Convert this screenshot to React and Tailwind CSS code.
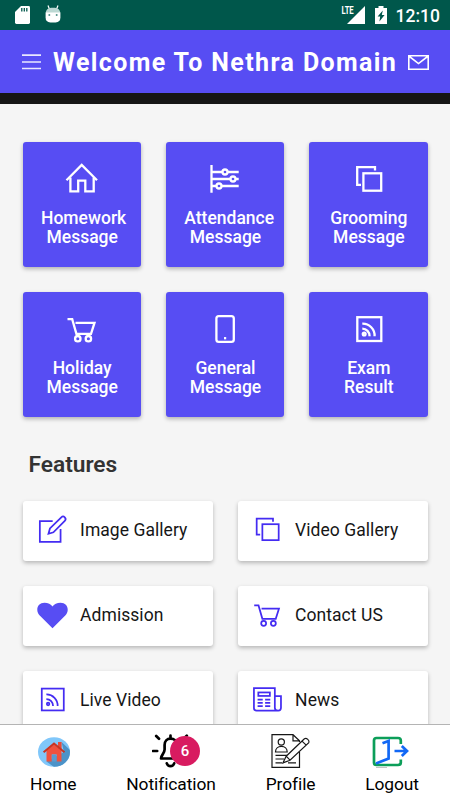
import React from "react";

const icons = {
  home: (
    <>
      <path d="M2.5 20.2 17.7 4.9 33 20.2" />
      <path d="M6.4 17.5V31.4H14.2V20.6H21.3V31.4H29.7V17.5" />
    </>
  ),
  sliders: (
    <>
      <path d="M4.5 5V32.7M4.5 12H15.3M20.7 12H31.7M4.5 19H23.3M28.7 19H31.7M4.5 26H9.3M14.7 26H31.7" />
      <circle cx="18" cy="12" r="2.5" />
      <circle cx="26" cy="19" r="2.5" />
      <circle cx="12" cy="26" r="2.5" />
    </>
  ),
  copies: (
    <>
      <path d="M10 24.8H6.2V7.2H24V10.6" />
      <rect x="12.4" y="13.3" width="17.8" height="17.4" />
    </>
  ),
  cart: (
    <>
      <path d="M3.5 9.2H8.2L12.4 23.8H27L30.5 12.8H11.5" />
      <circle cx="13.8" cy="28.7" r="2.7" />
      <circle cx="24.4" cy="28.7" r="2.7" />
    </>
  ),
  phone: (
    <>
      <rect x="9.4" y="6.1" width="17.4" height="25.8" rx="2.4" />
      <path d="M17 28.2H19.2" />
    </>
  ),
  rss: (
    <>
      <rect x="6.3" y="7.2" width="24" height="23.8" />
      <path d="M11.3 13.6A12 12 0 0 1 23.6 26.2M11.3 18.6A7.4 7.4 0 0 1 18.6 26.2" />
      <circle cx="13.2" cy="24" r="1.4" />
    </>
  ),
  edit: (
    <>
      <path d="M18.2 10H4.2V32.5H26.8V18.6" />
      <path d="M13.6 23.8 15.2 18 27.6 5.8A2.5 2.5 0 0 1 31.4 9.6L19 22.2Z" />
    </>
  ),
  heart: (
    <path
      d="M18 34 3.8 19.8C-1 14.4 1.7 6.4 9.3 6.4 13 6.4 16.4 8.2 18 10.4 19.6 8.2 23 6.4 26.7 6.4 34.3 6.4 37 14.4 32.2 19.8Z"
      fill="#574df3"
      stroke="none"
    />
  ),
  news: (
    <>
      <path d="M26 28.5V6.8H3.2V28.4C3.2 30.2 4.4 31.2 6 31.2H29.8C31.6 31.2 32.7 30 32.7 28.2V15.4H26M26 28.2C26 30 27.4 31.2 29.4 31.2" />
      <rect x="8" y="11.4" width="12.6" height="3.8" />
      <path d="M7.2 19.2H12.8M15.4 19.2H21M7.2 22.8H12.8M15.4 22.8H21M7.2 26.4H12.8M15.4 26.4H21" />
    </>
  ),
};

const messages = [
  { icon: "home", title: "Homework Message" },
  { icon: "sliders", title: "Attendance Message" },
  { icon: "copies", title: "Grooming Message" },
  { icon: "cart", title: "Holiday Message" },
  { icon: "phone", title: "General Message" },
  { icon: "rss", title: "Exam Result" },
];

const features = [
  { icon: "edit", title: "Image Gallery" },
  { icon: "copies", title: "Video Gallery" },
  { icon: "heart", title: "Admission" },
  { icon: "cart", title: "Contact US" },
  { icon: "rss", title: "Live Video" },
  { icon: "news", title: "News" },
];

const StatusBar = () => {
  return (
    <div className="h-[30px] shrink-0 bg-[#00574b] flex items-center pl-[15px] pr-[10px] text-white">
      <svg className="w-[15px] h-[18px]" viewBox="0 0 15 18">
        <path d="M6 0H13.6Q15 0 15 1.4V16.6Q15 18 13.6 18H1.4Q0 18 0 16.6V6Z" fill="#fff" />
        <path d="M6.8 2V5.5M9.3 2V5.5M11.8 2V5.5" stroke="#00574b" strokeWidth="1.3" />
      </svg>
      <svg className="w-4 h-[18px] ml-[15px] mb-[2px]" viewBox="0 0 16 18">
        <path d="M3 .5 4.4 4M13 .5 11.6 4" stroke="#fff" strokeWidth="1.2" />
        <path d="M.8 8C.8 4.6 3.5 2.8 8 2.8S15.2 4.6 15.2 8Z" fill="#bcd8d3" />
        <path d="M.6 7.4H15.4V12.6Q15.4 17.4 10.6 17.4H5.4Q.6 17.4 .6 12.6Z" fill="#fff" />
        <circle cx="4.3" cy="10" r="1" fill="#4f8f86" />
        <circle cx="11.7" cy="10" r="1" fill="#4f8f86" />
      </svg>
      <div className="ml-auto flex items-center">
        <span className="self-start -mr-[10px] text-[11px] leading-[11px] font-bold tracking-[-0.2px] scale-x-70">
          LTE
        </span>
        <svg className="w-[18px] h-[18px]" viewBox="0 0 18 18">
          <path d="M18 0V18H0Z" fill="#fff" />
        </svg>
        <svg className="w-3 h-[18px] ml-[10px]" viewBox="0 0 12 18">
          <path d="M3.5 0H8.5V2H12V18H0V2H3.5Z" fill="#fff" />
          <path d="M7.8 4.5 2.6 10.6H5.2L4.4 15.6 9.6 9H6.8Z" fill="#00574b" />
        </svg>
        <span className="ml-[9px] mt-[2px] text-[17.5px] leading-[18px] font-medium">12:10</span>
      </div>
    </div>
  );
};

const Header = () => {
  return (
    <div className="h-[74px] shrink-0 bg-[#574df3] border-b-[11px] border-b-[#161616] flex items-center pl-[22px] pr-[21px]">
      <svg className="w-[19px] h-4 shrink-0" viewBox="0 0 19 16" stroke="#e9e7ff" strokeWidth="1.7">
        <path d="M0 1.2H19M0 8H19M0 14.5H19" />
      </svg>
      <h1 className="ml-3 mt-[2px] text-[25px] leading-none font-bold tracking-[1.38px] whitespace-nowrap text-white">
        Welcome To Nethra Domain
      </h1>
      <svg className="w-[21px] h-[15px] shrink-0 ml-auto mt-[1px]" viewBox="0 0 21 15" fill="none" stroke="#fff" strokeWidth="1.6">
        <path d="M.8 .8H20.2V14.2H.8ZM.8 1 10.5 8.6 20.2 1" />
      </svg>
    </div>
  );
};

const MessageCard = ({ icon, title }) => {
  return (
    <div className="h-[125px] rounded-[3px] bg-[#574df3] pl-[18.5px] pr-[17.5px] pt-[18px] shadow-[0_2px_4px_rgba(0,0,0,0.28)] flex flex-col">
      <svg className="w-9 h-9 self-center shrink-0" viewBox="0 0 36 36" fill="none" stroke="#fff" strokeWidth="2.3">
        {icons[icon]}
      </svg>
      <p className="mt-[13px] text-center text-[17.5px] leading-[19px] font-medium text-white">
        {title.split(" ").map((word) => (
          <span key={word} className="block">
            {word}
          </span>
        ))}
      </p>
    </div>
  );
};

const FeatureCard = ({ icon, title }) => {
  return (
    <div className="h-[60px] rounded-[3px] bg-white pl-[13.6px] pb-[2px] shadow-[0_2px_4px_rgba(0,0,0,0.26)] flex items-center">
      <svg
        className="w-[33px] h-[33px] shrink-0 mb-[3px]"
        viewBox="0 0 36 36"
        fill="none"
        stroke="#442cf2"
        strokeWidth="1.9"
      >
        {icons[icon]}
      </svg>
      <span className="ml-[11px] text-[17.5px] tracking-[0.05px] text-[#161616]">{title}</span>
    </div>
  );
};

const HomeIcon = () => (
  <svg className="w-8 h-[30px] mt-[2px] ml-px" viewBox="0 0 32 30">
    <defs>
      <clipPath id="disc">
        <ellipse cx="16" cy="15" rx="16" ry="14.8" />
      </clipPath>
    </defs>
    <g clipPath="url(#disc)">
      <rect width="32" height="30" fill="#80c7fa" />
      <path d="M23.5 5 32 13V30H16L8.5 24.5 26 15Z" fill="#4c93c8" />
      <path d="M20 5H23.6V12H20Z" fill="#e64c3c" />
      <path d="M8.5 13.5 16 7.5 23.5 13.5V24.5H18.6V17.5H13.8V24.5H8.5Z" fill="#f0513e" />
      <path d="M5.6 15.2 16 6.6 26.5 15.2" fill="none" stroke="#c93422" strokeWidth="2" />
      <path d="M13.8 17.5H18.6V24.5H13.8Z" fill="#5a9bd0" />
    </g>
  </svg>
);

const BellIcon = () => (
  <svg className="w-[38px] h-[34px]" viewBox="0 0 38 34" fill="none" stroke="#000" strokeWidth="2.7" strokeLinecap="round">
    <path d="M4.2 2 7 4.8M.9 17H5.2M34.8 1.6 32.4 4M32 17H37" />
    <path d="M18.5 1.7V4M9 24.5H28C28 22.5 25 20.5 25 17V11C25 7 22 4.7 18.5 4.7S12.6 7 12.6 11V15.6C12.6 19.6 9 21 9 24.5Z" strokeLinejoin="round" />
    <path d="M14.8 29.3C16 33 21 33 22.2 29.3" />
  </svg>
);

const ProfileIcon = () => (
  <svg className="w-10 h-[34px]" viewBox="0 0 40 34" fill="none" stroke="#171717" strokeWidth="1.2">
    <path d="M28.5 8V6.8L22 .7H1V33.3H28.5V18M22 .7V6.8H28.5" />
    <circle cx="10.3" cy="8" r="3.1" />
    <path d="M4.5 18C4.5 14.6 7 12.4 10.4 12.4S16.2 14.6 16.2 18Z" />
    <path d="M4.5 21.4H16M4.5 25H13M4.5 28.8H11M17 28.8H25" />
    <path d="M12 28.8 15.2 22.2 33.4 4.8Q35 3.8 36.8 5.4T37.8 8.6L19 26.2ZM15.2 22.2 19 26.2M31 7.1 35.2 11.1" fill="#fff" />
  </svg>
);

const LogoutIcon = () => (
  <svg className="w-[37px] h-[32px] mr-[3px] mt-[1px]" viewBox="0 0 37 32" fill="none">
    <path d="M28.8 8V4.5Q28.8 2 26 2H4.5Q2 2 2 4.5V26.5Q2 29 4.5 29H26Q28.8 29 28.8 26.5V23.5" stroke="#0c9e59" strokeWidth="2.7" />
    <path d="M10.5 7.3 16.6 5V22.5L4 27.5M22.5 15H34.5M29.8 10 35 15 29.8 20" stroke="#1268f5" strokeWidth="2.7" />
    <path d="M4 31.5H15" stroke="#c4c4c4" strokeWidth="1" />
  </svg>
);

const NavItem = ({ label, children }) => {
  return (
    <div className="flex flex-col items-center">
      <div className="relative h-[36px] flex items-center">{children}</div>
      <span className="mt-[3px] text-[17.4px] leading-6 tracking-[-0.08px] text-black">{label}</span>
    </div>
  );
};

const BottomNav = () => {
  return (
    <div className="h-[76px] shrink-0 bg-white border-t border-t-[#b4b4b4] pt-[8px] pl-[30px] pr-[31px] flex justify-between items-start">
      <NavItem label="Home">
        <HomeIcon />
      </NavItem>
      <NavItem label="Notification">
        <BellIcon />
        <span className="absolute left-[18px] top-[3px] w-[30px] h-[30px] rounded-full bg-[#d81b60] text-white text-[15px] font-medium flex items-center justify-center">
          6
        </span>
      </NavItem>
      <NavItem label="Profile">
        <ProfileIcon />
      </NavItem>
      <NavItem label="Logout">
        <LogoutIcon />
      </NavItem>
    </div>
  );
};

const App = () => {
  return (
    <div className="w-[450px] h-[800px] overflow-hidden flex flex-col bg-[#f5f5f5] font-[Roboto,sans-serif]">
      <StatusBar />
      <Header />
      <div className="flex-1 min-h-0 overflow-hidden px-[22.5px] pt-[38px]">
        <div className="grid grid-cols-3 gap-[25px]">
          {messages.map((item) => (
            <MessageCard key={item.title} {...item} />
          ))}
        </div>
        <h2 className="mt-[34px] ml-[6px] text-[22.7px] leading-[28px] font-semibold text-[#333]">Features</h2>
        <div className="mt-[22px] grid grid-cols-2 gap-[25px]">
          {features.map((item) => (
            <FeatureCard key={item.title} {...item} />
          ))}
        </div>
      </div>
      <BottomNav />
    </div>
  );
};

export default App;
